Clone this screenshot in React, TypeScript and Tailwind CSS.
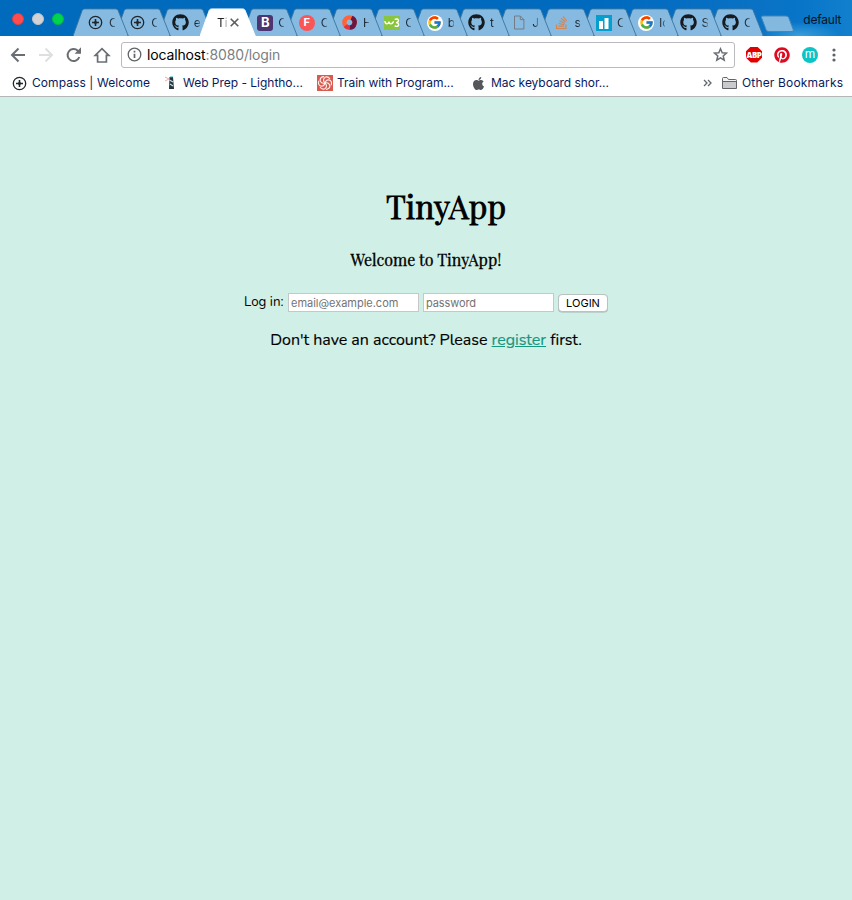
import type { ReactNode } from "react";
import { FaGithub, FaApple, FaStackOverflow, FaPinterest } from "react-icons/fa";
import { FcGoogle } from "react-icons/fc";

function Compass({ size = 15 }: { size?: number }) {
  return (
    <svg width={size} height={size} viewBox="0 0 15 15" fill="none" stroke="#20262b">
      <circle cx="7.5" cy="7.5" r="6.2" strokeWidth="1.3" />
      <path d="M7.5 4v7M4 7.5h7" strokeWidth="1.6" />
      <path d="M7.5 5.5L9.5 7.5 7.5 9.5 5.5 7.5z" fill="#20262b" stroke="none" />
    </svg>
  );
}

const github = <FaGithub size={17} color="#161b1f" />;
const google = (
  <span className="flex size-4 items-center justify-center rounded-full bg-white">
    <FcGoogle size={15} />
  </span>
);
const compassTab = (
  <span className="mr-[2px]">
    <Compass />
  </span>
);

const tabs: { icon?: ReactNode; label: string }[] = [
  { icon: compassTab, label: "C" },
  { icon: compassTab, label: "C" },
  { icon: github, label: "e" },
  { label: "Ti" },
  {
    icon: <span className="flex size-4 items-center justify-center rounded-[3px] bg-[#4b3672] text-[13px] font-bold text-white">B</span>,
    label: "C",
  },
  {
    icon: <span className="mr-[2px] flex size-4 shrink-0 items-center justify-center rounded-full bg-[#fb5657] text-[11px] font-bold text-white">F</span>,
    label: "C",
  },
  {
    icon: (
      <svg width="15" height="15" viewBox="0 0 15 15" fill="none" strokeWidth="4.4">
        <circle cx="7.5" cy="7.5" r="5.1" stroke="#ff6338" />
        <path d="M9.5 2.8a5.1 5.1 0 0 1-2 9.8" stroke="#6a1741" />
        <path d="M3.4 10.6a5.1 5.1 0 0 0 4.1 2" stroke="#e23140" />
      </svg>
    ),
    label: "H",
  },
  {
    icon: (
      <svg width="16" height="14" viewBox="0 0 16 14">
        <path d="M0 0h16v14H0z" fill="#8ac53f" />
        <path
          d="M.8 5.2q.6 2.8 2.2 2.6T5 5.6q.4 2.4 2 2.2t2.6-2.4M10.6 3.4q3.6-1.2 3.8 1 0 2-2.4 2.2 2.8 0 2.6 2.4-.6 2.2-4 .8"
          fill="none"
          stroke="#fff"
          strokeWidth="1.4"
        />
      </svg>
    ),
    label: "C",
  },
  { icon: google, label: "b" },
  { icon: github, label: "t" },
  {
    icon: (
      <svg width="12" height="15" viewBox="0 0 12 15" fill="none" stroke="#737c84">
        <path d="M1.5 1h5.8l3.6 3.6V14H1.5zM7.3 1v3.6h3.6" />
      </svg>
    ),
    label: "J",
  },
  { icon: <FaStackOverflow size={15} color="#d58552" />, label: "s" },
  {
    icon: (
      <svg width="16" height="16" viewBox="0 0 16 16">
        <path d="M0 0h16v16H0z" fill="#049fce" />
        <path d="M3 6h4v8H3zM8.5 3h4v11h-4z" fill="#fff" />
      </svg>
    ),
    label: "C",
  },
  { icon: google, label: "lo" },
  { icon: github, label: "S" },
  { icon: github, label: "C" },
];

function Tab({ icon, label, index }: { icon?: ReactNode; label: string; index: number }) {
  const active = !icon;
  return (
    <div className="relative h-7 w-[42.33px] shrink-0" style={{ zIndex: active ? 30 : 20 - index }}>
      <svg className="absolute left-0 top-0" width="57" height="28" viewBox="0 0 57 28">
        <path
          d="M0 28L9.2 2.4Q9.9 .9 11.4 .9H42.9Q44.4 .9 45.1 2.4L55.3 28z"
          fill={active ? "#ffffff" : "#87bae0"}
          stroke={active ? "#ffffff" : "#39759e"}
          strokeWidth=".9"
        />
        {!active && <path d="M1 27.5h53" stroke="#87bae0" strokeWidth="1.2" />}
      </svg>
      {active ? (
        <div className="relative flex h-7 items-center pl-[17px] pt-px text-[12px] text-[#222]">
          <span className="w-[11px] overflow-hidden [mask-image:linear-gradient(to_right,#000_55%,transparent)]">{label}</span>
          <svg className="ml-[2px]" width="9" height="9" viewBox="0 0 9 9" stroke="#5b5d60" strokeWidth="1.6">
            <path d="M.7.7l7.6 7.6M8.3.7L.7 8.3" />
          </svg>
        </div>
      ) : (
        <div className="relative flex h-7 w-[42px] items-center pl-[14px] pt-px">
          <span className="flex w-[18px] shrink-0 items-center justify-center">{icon}</span>
          <span className="ml-1 w-[6px] shrink-0 overflow-hidden text-[12px] text-[#1c2a36] [mask-image:linear-gradient(to_right,#000_45%,rgba(0,0,0,0.35))]">{label}</span>
        </div>
      )}
    </div>
  );
}

function TitleBar() {
  return (
    <div className="relative flex h-9 overflow-hidden bg-[radial-gradient(ellipse_40px_14px_at_800px_36px,#3b9fdb_0%,transparent_100%),linear-gradient(90deg,#006abd_0%,#006abf_70%,#0a72c5_89%,#0875c8_94%,#1280cd_100%)]">
      <div className="flex w-[73px] shrink-0 items-center gap-2 pl-3 pt-[2px]">
        <span className="size-3 rounded-full border border-[#d94247] bg-[#ff4c4f]" />
        <span className="size-3 rounded-full border border-[#bec4cb] bg-[#d3d3d5]" />
        <span className="size-3 rounded-full border border-[#00b943] bg-[#00d34d]" />
      </div>
      <div className="flex pt-[8px]">
        {tabs.map((tab, i) => (
          <Tab key={i} index={i} icon={tab.icon} label={tab.label} />
        ))}
      </div>
      <svg className="ml-[10px] mt-[15px] shrink-0" width="35" height="18" viewBox="0 0 35 18">
        <path d="M3 1h23q2 0 2.7 1.6l4.6 12.2q.5 1.7-1.3 1.7H9q-2 0-2.8-1.6L1.5 2.7Q1 1 3 1z" fill="#84b9df" stroke="#4387b8" />
      </svg>
      <span className="ml-[8px] mt-[11px] text-[12px] leading-[18px] tracking-[-0.2px] text-[#071323]">default</span>
    </div>
  );
}

function Toolbar() {
  return (
    <div className="flex h-9 items-center bg-white pt-px">
      <svg className="ml-[10px]" width="102" height="20" viewBox="0 0 102 20" fill="none" stroke="#6a6e73" strokeWidth="2">
        <path d="M15 10H2M8.5 3.5L2 10l6.5 6.5" />
        <path d="M29 10h13M35.5 3.5L42 10l-6.5 6.5" stroke="#dddfe1" />
        <path d="M69.3 12a6 6 0 1 1-1.5-6.3l2 2" />
        <path d="M71 2.3v6.4h-6.4z" fill="#6a6e73" stroke="none" />
        <path d="M85.2 10.4h2.4v6.6h8.8v-6.6h2.4L92 3.6z" strokeWidth="1.7" />
      </svg>
      <div className="ml-[9px] flex h-[26px] w-[614px] items-center rounded-[3px] border border-[#b8babd] pl-[5px] pr-[6px]">
        <svg width="15" height="15" viewBox="0 0 15 15" fill="none" stroke="#5f6368">
          <circle cx="7.5" cy="7.5" r="6.3" strokeWidth="1.3" />
          <path d="M7.5 6.7v4.2M7.5 3.8v1.7" strokeWidth="1.7" />
        </svg>
        <span className="ml-[5px] text-[14px] tracking-[-0.14px] text-black">
          localhost<span className="text-[#7b7f83]">:8080/login</span>
        </span>
        <svg className="ml-auto" width="15" height="15" viewBox="0 0 15 15" fill="none" stroke="#696d74" strokeWidth="1.5">
          <path d="M7.5 1.8l1.7 4 4.3.3-3.3 2.8 1 4.2-3.7-2.3-3.7 2.3 1-4.2L1.5 6.1l4.3-.3z" />
        </svg>
      </div>
      <span className="ml-[11px] flex size-4 shrink-0 items-center justify-center bg-[#e20000] font-['Open_Sans',sans-serif] text-[8px] font-extrabold tracking-[-0.5px] text-white [clip-path:polygon(30%_0,70%_0,100%_30%,100%_70%,70%_100%,30%_100%,0_70%,0_30%)]">
        ABP
      </span>
      <FaPinterest className="ml-[12px]" size={16} color="#df0a20" />
      <span className="ml-[12px] flex size-4 items-center justify-center rounded-full bg-[#0cc4c6] pb-px text-[12px] leading-none text-white">m</span>
      <svg className="ml-[14px]" width="4" height="16" viewBox="0 0 4 16" fill="#5f6368">
        <circle cx="2" cy="3" r="1.6" />
        <circle cx="2" cy="8" r="1.6" />
        <circle cx="2" cy="13" r="1.6" />
      </svg>
    </div>
  );
}

function Bookmarks() {
  return (
    <div className="flex h-[25px] items-center whitespace-nowrap border-b border-[#b4b6b6] bg-white pb-[2px] text-[12px] text-[#091a60]">
      <span className="ml-[12px] flex w-[15px]"><Compass /></span>
      <span className="ml-[5px] w-[118px] tracking-[0.08px]">Compass | Welcome</span>
      <svg className="ml-[15px]" width="10" height="14" viewBox="0 0 10 14">
        <path d="M0 1l4 2-4 2" fill="none" stroke="#f2aaa9" />
        <path d="M4.5 1H8l1 12H4z" fill="#26343d" />
        <path d="M4.5 4L8 6M5 8l3 2" stroke="#c7dce4" strokeWidth="1.3" />
        <path d="M5 .8h3" stroke="#67c5d6" />
      </svg>
      <span className="ml-[8px] w-[120px] tracking-[-0.02px]">Web Prep - Lightho...</span>
      <svg className="ml-[14px]" width="16" height="16" viewBox="0 0 16 16">
        <path d="M0 0h16v16H0z" fill="#d95b50" />
        <g fill="none" stroke="#fff0ed" strokeWidth="1.1">
          {[0, 60, 120, 180, 240, 300].map((angle) => (
            <path key={angle} transform={`rotate(${angle} 8 8)`} d="M8 8Q5 5 8 2.3Q11 1 13 4" />
          ))}
        </g>
      </svg>
      <span className="ml-[4px] w-[118px] tracking-[-0.04px]">Train with Program...</span>
      <FaApple className="ml-[16px] mr-px" size={15} color="#55575a" />
      <span className="ml-[4px] w-[118px] tracking-[-0.05px]">Mac keyboard shor...</span>
      <svg className="ml-[94px]" width="10" height="8" viewBox="0 0 10 8" fill="none" stroke="#62656a" strokeWidth="1.3">
        <path d="M1 1l3 3-3 3M5 1l3 3-3 3" />
      </svg>
      <svg className="ml-[8px]" width="17" height="14" viewBox="0 0 17 14" fill="#f3f3f3" stroke="#626569">
        <path d="M1.5 12.5v-10q0-1 1-1h3.5l1.5 2h7q1 0 1 1v8z" />
        <path d="M2 6h13v6H2z" fill="#c9cacb" stroke="none" />
        <path d="M1.5 5.5h14" />
      </svg>
      <span className="ml-[4px] tracking-[0.16px]">Other Bookmarks</span>
    </div>
  );
}

export default function App() {
  return (
    <div className="flex h-[900px] w-[852px] flex-col overflow-hidden bg-[#d0efe6] font-['Inter','Roboto',sans-serif]">
      <TitleBar />
      <Toolbar />
      <Bookmarks />
      <main className="flex flex-col items-center pt-[85px] text-black">
        <h1 className="ml-[40px] font-['Playfair_Display','Liberation_Serif',serif] text-[32px] leading-[48px] [-webkit-text-stroke:0.8px_#000]">TinyApp</h1>
        <h2 className="mt-[18px] font-['Playfair_Display','Liberation_Serif',serif] text-[16px] leading-[24px] [-webkit-text-stroke:0.3px_#000]">Welcome to TinyApp!</h2>
        <form className="mt-[21px] flex h-[19px] items-center" onSubmit={(event) => event.preventDefault()}>
          <label className="w-[44px] whitespace-nowrap pt-px font-['Nunito','Lato',sans-serif] text-[13.33px]">Log in:</label>
          <input className="h-[19px] w-[131px] border border-[#c6c7c7] bg-white px-[2px] pt-px text-[11px] tracking-[-0.02px] placeholder:text-[#737373]" placeholder="email@example.com" />
          <input className="ml-[4px] h-[19px] w-[131px] border border-[#c6c7c7] bg-white px-[2px] pt-px text-[11px] tracking-[-0.1px] placeholder:text-[#737373]" type="password" placeholder="password" />
          <button className="ml-[4px] h-[18px] w-[50px] rounded-[4px] border border-[#b8c2c0] bg-white pt-px text-[11px] leading-none shadow-[0_0.5px_0_#a6b6b1]">LOGIN</button>
        </form>
        <p className="mt-[16px] font-['Nunito','Lato',sans-serif] text-[16px] leading-[24px] tracking-[-0.02px] [-webkit-text-stroke:0.15px_currentColor]">
          Don't have an account? Please <a className="text-[#16967f] underline" href="#">register</a> first.
        </p>
      </main>
    </div>
  );
}
